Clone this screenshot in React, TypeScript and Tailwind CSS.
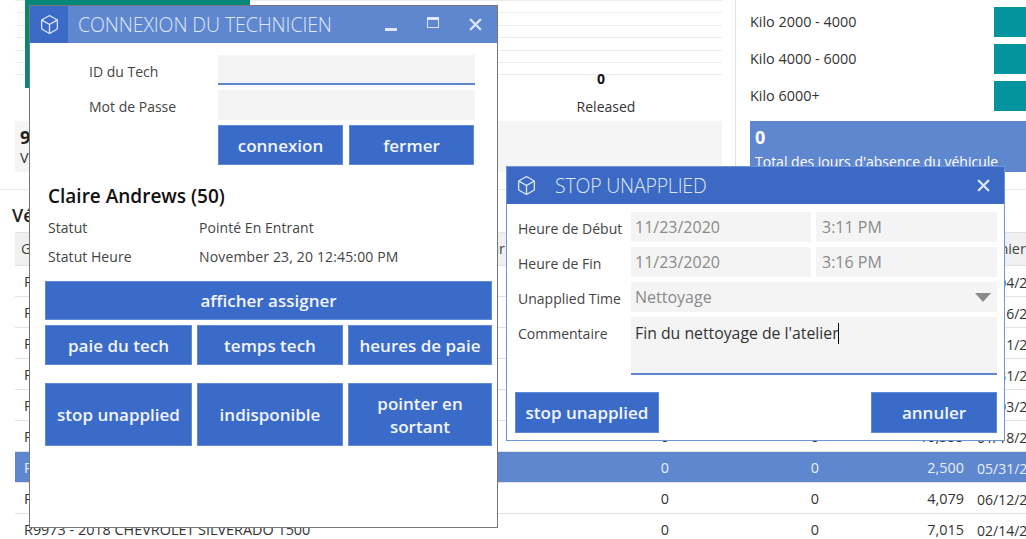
import { Box, X } from 'lucide-react';
import type { ReactNode } from 'react';

const ROWS = [
  { name: 'R9968 - 2017 CHEVROLET SILVERADO 1500', km: '12,480', date: '08/04/2020' },
  { name: 'R9969 - 2017 CHEVROLET SILVERADO 1500', km: '9,315', date: '03/16/2020' },
  { name: 'R9970 - 2018 CHEVROLET SILVERADO 1500', km: '6,702', date: '09/11/2020' },
  { name: 'R9971 - 2018 CHEVROLET SILVERADO 1500', km: '8,140', date: '10/31/2020' },
  { name: 'R9972 - 2018 CHEVROLET SILVERADO 1500', km: '5,266', date: '04/03/2020' },
  { name: 'R9972 - 2018 CHEVROLET SILVERADO 1500', km: '10,555', date: '01/18/2020' },
  { name: 'R9973 - 2018 CHEVROLET SILVERADO 1500', km: '2,500', date: '05/31/2020', selected: true },
  { name: 'R9973 - 2018 CHEVROLET SILVERADO 1500', km: '4,079', date: '06/12/2020' },
  { name: 'R9973 - 2018 CHEVROLET SILVERADO 1500', km: '7,015', date: '02/14/2020' },
];

const KILOS = ['Kilo 2000 - 4000', 'Kilo 4000 - 6000', 'Kilo 6000+'];

function Btn({ children, className }: { children: ReactNode; className: string }) {
  return (
    <button className={`flex items-center justify-center border border-[#5f8ad6] bg-[#3a6bc8] text-center text-[17px] font-semibold leading-[23px] text-[#f2f5fb] ${className}`}>
      {children}
    </button>
  );
}

function Field({ children, className }: { children?: ReactNode; className: string }) {
  return <div className={`flex items-center bg-[#f4f4f4] px-[4px] text-[16px] text-[#8a8a8a] ${className}`}>{children}</div>;
}

function LoginWindow() {
  return (
    <div className="absolute left-[29px] top-[5px] h-[523px] w-[469px] border border-[#777] bg-white">
      <div className="flex h-[37px] items-center bg-[#5f87cf] text-[#dfe7f6]">
        <div className="flex h-full w-[38px] items-center justify-center bg-[#3b6bc6]">
          <Box size={21} strokeWidth={1.5} />
        </div>
        <span className="ml-[10px] text-[19.5px] font-light tracking-[-0.1px]">CONNEXION DU TECHNICIEN</span>
        <div className="ml-auto flex items-center">
          <span className="mt-[9px] h-[3px] w-[12px] bg-[#dfe7f6]" />
          <span className="ml-[30px] mb-[5px] h-[11px] w-[12px] border border-t-[3px] border-[#dfe7f6]" />
          <X size={19} strokeWidth={3} className="ml-[27px] mr-[12px] mb-[1px]" />
        </div>
      </div>

      <div className="mt-[12px] grid grid-cols-[188px_257px] gap-y-[5px] text-[14px] text-[#444]">
        <span className="h-[30px] pl-[59px] leading-[34px]">ID du Tech</span>
        <div className="h-[30px] border-b-2 border-[#5f87cf] bg-[#f4f4f4]" />
        <span className="h-[30px] pl-[59px] leading-[34px]">Mot de Passe</span>
        <div className="h-[30px] bg-[#f4f4f4]" />
        <span />
        <div className="flex gap-[6px]">
          <Btn className="h-[40px] w-[125px]">connexion</Btn>
          <Btn className="h-[40px] w-[125px]">fermer</Btn>
        </div>
      </div>

      <h2 className="mt-[19px] pl-[18px] text-[19px] font-semibold leading-[24px] text-[#111]">Claire Andrews (50)</h2>
      <div className="mt-[10px] grid grid-cols-[151px_1fr] gap-y-[9px] pl-[18px] text-[14px] leading-[20px] tracking-[0.05px] text-[#444]">
        <span>Statut</span>
        <span>Pointé En Entrant</span>
        <span>Statut Heure</span>
        <span className="tracking-[0.15px]">November 23, 20 12:45:00 PM</span>
      </div>

      <div className="mx-[15px] mt-[14px] w-[447px]">
        <Btn className="h-[39px] w-full">afficher assigner</Btn>
        <div className="mt-[5px] grid grid-cols-[147px_146px_144px] gap-[5px]">
          <Btn className="h-[40px]">paie du tech</Btn>
          <Btn className="h-[40px]">temps tech</Btn>
          <Btn className="h-[40px]">heures de paie</Btn>
        </div>
        <div className="mt-[18px] grid grid-cols-[147px_146px_144px] gap-[5px]">
          <Btn className="h-[63px]">stop unapplied</Btn>
          <Btn className="h-[63px]">indisponible</Btn>
          <Btn className="h-[63px] px-[20px]">pointer en sortant</Btn>
        </div>
      </div>
    </div>
  );
}

function StopWindow() {
  return (
    <div className="absolute left-[506px] top-[166px] h-[275px] w-[499px] border border-[#6f95d8] bg-white">
      <div className="flex h-[37px] items-center bg-[#3b69c3] text-[#dfe7f6]">
        <Box size={21} strokeWidth={1.5} className="ml-[9px]" />
        <span className="ml-[18px] text-[19.5px] font-light tracking-[-0.2px]">STOP UNAPPLIED</span>
        <X size={19} strokeWidth={3} className="ml-auto mr-[11px]" />
      </div>

      <div className="mt-[8px] grid grid-cols-[108px_180px_181px] gap-[5px] pl-[11px] text-[14px] leading-[20px] text-[#444]">
        <span className="self-center whitespace-nowrap pt-[3px]">Heure de Début</span>
        <Field className="h-[30px]">11/23/2020</Field>
        <Field className="h-[30px] pl-[6px]">3:11 PM</Field>
        <span className="self-center whitespace-nowrap pt-[3px]">Heure de Fin</span>
        <Field className="h-[30px]">11/23/2020</Field>
        <Field className="h-[30px] pl-[6px]">3:16 PM</Field>
        <span className="self-center whitespace-nowrap pt-[3px]">Unapplied Time</span>
        <Field className="col-span-2 h-[30px] justify-between">
          Nettoyage
          <svg width="16" height="9" viewBox="0 0 16 9" className="mr-[2px]">
            <polygon points="0,0 16,0 8,9" fill="#8a8a8a" />
          </svg>
        </Field>
        <span className="pt-[7px]">Commentaire</span>
        <div className="col-span-2 h-[58px] border-b-2 border-[#5f87cf] bg-[#f4f4f4] px-[4px] text-[15.8px] leading-[32px] text-[#333]">
          Fin du nettoyage de l'atelier
          <span className="ml-[-1px] inline-block h-[21px] w-px translate-y-[5px] bg-black" />
        </div>
      </div>

      <div className="mt-[17px] flex justify-between pl-[8px] pr-[7px]">
        <Btn className="h-[41px] w-[144px]">stop unapplied</Btn>
        <Btn className="h-[41px] w-[126px]">annuler</Btn>
      </div>
    </div>
  );
}

function Background() {
  return (
    <div className="text-[14.4px] text-[#333]">
      <div className="flex h-[190px] border-b border-[#ececec]">
        <div className="relative w-[735px] shrink-0 pl-[15px] pr-[13px]">
          <div className="flex h-[69px] flex-col">
            {[0, 1, 2, 3, 4, 5, 6].map((i) => (
              <div key={i} className="h-[12.4px] shrink-0 border-t border-[#ececec]" />
            ))}
          </div>
          <div className="absolute left-[25px] top-0 h-[88px] w-[225px] bg-[#07877a]" />
          <div className="flex h-[52px] flex-col pl-[561px] text-center leading-[20px]">
            <b className="mr-[8px] w-[50px] text-[14px] text-[#111]">0</b>
            <span className="mt-[8px] w-[60px] text-[14px]">Released</span>
          </div>
          <div className="h-[51px] bg-[#f5f5f5] pl-[5px] pt-[4px]">
            <div className="text-[18px] font-bold leading-[24px] text-[#222]">9</div>
            <div className="leading-[18px]">Véhicules</div>
          </div>
        </div>
        <div className="flex-1 border-l border-[#e4e4e4] pl-[14px]">
          <div className="flex h-[121px] flex-col pt-[7px]">
            {KILOS.map((k) => (
              <div key={k} className="mb-[7px] flex h-[30px] items-center justify-between">
                <span className="text-[#333]">{k}</span>
                <span className="h-full w-[32px] bg-[#03949f]" />
              </div>
            ))}
          </div>
          <div className="h-[51px] overflow-hidden bg-[#5f87cf] pl-[5px] pt-[4px] text-white">
            <div className="text-[18px] font-bold leading-[24px]">0</div>
            <div className="mt-[3px] whitespace-nowrap text-[14px] leading-[20px]">Total des jours d'absence du véhicule</div>
          </div>
        </div>
      </div>

      <h2 className="pl-[12px] pt-[13px] text-[18px] font-semibold leading-[24px] text-[#222]">Véhicules</h2>
      <div className="ml-[15px] mt-[5px]">
        <div className="flex h-[34px] items-center border-y border-[#e2e2e2] bg-[#f0f0f0] text-[#444]">
          <span className="w-[460px] pl-[6px]">Groupe</span>
          <span className="w-[30px] text-right">Jour</span>
          <span className="ml-[470px] whitespace-nowrap">Dernier</span>
        </div>
        {ROWS.map((r, i) => (
          <div
            key={i}
            className={`grid h-[31px] grid-cols-[453px_201px_150px_145px_1fr] items-center border-b border-[#e2e2e2] pt-[2px] ${r.selected ? 'bg-[#5f87cf] text-[#e8eef9]' : ''}`}
          >
            <span className="whitespace-nowrap pl-[9px]">{r.name}</span>
            <span className="text-right">0</span>
            <span className="text-right">0</span>
            <span className="text-right">{r.km}</span>
            <span className="whitespace-nowrap pl-[13px] text-[14px]">{r.date}</span>
          </div>
        ))}
      </div>
    </div>
  );
}

export default function App() {
  return (
    <div className="relative h-[539px] w-[1026px] overflow-hidden bg-white font-['Open_Sans','Noto_Sans',sans-serif]">
      <Background />
      <LoginWindow />
      <StopWindow />
    </div>
  );
}
